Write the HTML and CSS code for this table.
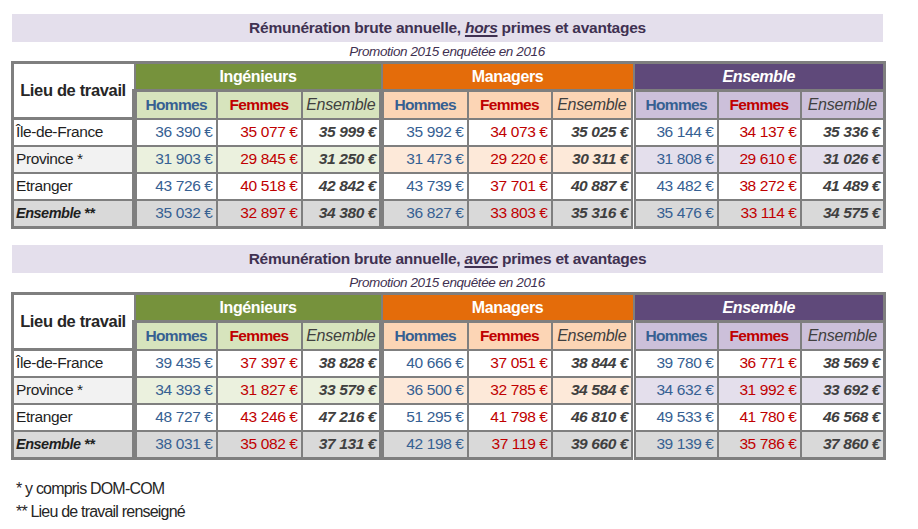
FILE: index.html
```html
<!DOCTYPE html>
<html lang="fr">
<head>
<meta charset="utf-8">
<title>Rémunération brute annuelle</title>
<link rel="stylesheet" href="styles.css">
</head>
<body>
<div class="page">
  <section class="block">
    <div class="title">Rémunération brute annuelle, <span class="u">hors</span> primes et avantages</div>
    <div class="subtitle">Promotion 2015 enquêtée en 2016</div>
    <table class="sal">
      <colgroup>
        <col class="c-lieu"><col class="c1"><col class="c2"><col class="c3"><col class="c4"><col class="c5"><col class="c6"><col class="c7"><col class="c8"><col class="c9">
      </colgroup>
      <thead>
        <tr class="r-group">
          <th rowspan="2" class="lieu-h">Lieu de travail</th>
          <th colspan="3" class="g-ing">Ingénieurs</th>
          <th colspan="3" class="g-man">Managers</th>
          <th colspan="3" class="g-ens">Ensemble</th>
        </tr>
        <tr class="r-sub">
          <th class="hm">Hommes</th><th class="fm">Femmes</th><th class="en">Ensemble</th>
          <th class="hm">Hommes</th><th class="fm">Femmes</th><th class="en">Ensemble</th>
          <th class="hm">Hommes</th><th class="fm">Femmes</th><th class="en">Ensemble</th>
        </tr>
      </thead>
      <tbody>
        <tr>
          <td class="lieu">Île-de-France</td>
          <td class="hm">36 390 €</td><td class="fm">35 077 €</td><td class="en">35 999 €</td>
          <td class="hm">35 992 €</td><td class="fm">34 073 €</td><td class="en">35 025 €</td>
          <td class="hm">36 144 €</td><td class="fm">34 137 €</td><td class="en">35 336 €</td>
        </tr>
        <tr class="prov">
          <td class="lieu">Province *</td>
          <td class="hm">31 903 €</td><td class="fm">29 845 €</td><td class="en">31 250 €</td>
          <td class="hm">31 473 €</td><td class="fm">29 220 €</td><td class="en">30 311 €</td>
          <td class="hm">31 808 €</td><td class="fm">29 610 €</td><td class="en">31 026 €</td>
        </tr>
        <tr>
          <td class="lieu">Etranger</td>
          <td class="hm">43 726 €</td><td class="fm">40 518 €</td><td class="en">42 842 €</td>
          <td class="hm">43 739 €</td><td class="fm">37 701 €</td><td class="en">40 887 €</td>
          <td class="hm">43 482 €</td><td class="fm">38 272 €</td><td class="en">41 489 €</td>
        </tr>
        <tr class="tot">
          <td class="lieu">Ensemble **</td>
          <td class="hm">35 032 €</td><td class="fm">32 897 €</td><td class="en">34 380 €</td>
          <td class="hm">36 827 €</td><td class="fm">33 803 €</td><td class="en">35 316 €</td>
          <td class="hm">35 476 €</td><td class="fm">33 114 €</td><td class="en">34 575 €</td>
        </tr>
      </tbody>
    </table>
  </section>

  <section class="block">
    <div class="title">Rémunération brute annuelle, <span class="u">avec</span> primes et avantages</div>
    <div class="subtitle">Promotion 2015 enquêtée en 2016</div>
    <table class="sal">
      <colgroup>
        <col class="c-lieu"><col class="c1"><col class="c2"><col class="c3"><col class="c4"><col class="c5"><col class="c6"><col class="c7"><col class="c8"><col class="c9">
      </colgroup>
      <thead>
        <tr class="r-group">
          <th rowspan="2" class="lieu-h">Lieu de travail</th>
          <th colspan="3" class="g-ing">Ingénieurs</th>
          <th colspan="3" class="g-man">Managers</th>
          <th colspan="3" class="g-ens">Ensemble</th>
        </tr>
        <tr class="r-sub">
          <th class="hm">Hommes</th><th class="fm">Femmes</th><th class="en">Ensemble</th>
          <th class="hm">Hommes</th><th class="fm">Femmes</th><th class="en">Ensemble</th>
          <th class="hm">Hommes</th><th class="fm">Femmes</th><th class="en">Ensemble</th>
        </tr>
      </thead>
      <tbody>
        <tr>
          <td class="lieu">Île-de-France</td>
          <td class="hm">39 435 €</td><td class="fm">37 397 €</td><td class="en">38 828 €</td>
          <td class="hm">40 666 €</td><td class="fm">37 051 €</td><td class="en">38 844 €</td>
          <td class="hm">39 780 €</td><td class="fm">36 771 €</td><td class="en">38 569 €</td>
        </tr>
        <tr class="prov">
          <td class="lieu">Province *</td>
          <td class="hm">34 393 €</td><td class="fm">31 827 €</td><td class="en">33 579 €</td>
          <td class="hm">36 500 €</td><td class="fm">32 785 €</td><td class="en">34 584 €</td>
          <td class="hm">34 632 €</td><td class="fm">31 992 €</td><td class="en">33 692 €</td>
        </tr>
        <tr>
          <td class="lieu">Etranger</td>
          <td class="hm">48 727 €</td><td class="fm">43 246 €</td><td class="en">47 216 €</td>
          <td class="hm">51 295 €</td><td class="fm">41 798 €</td><td class="en">46 810 €</td>
          <td class="hm">49 533 €</td><td class="fm">41 780 €</td><td class="en">46 568 €</td>
        </tr>
        <tr class="tot">
          <td class="lieu">Ensemble **</td>
          <td class="hm">38 031 €</td><td class="fm">35 082 €</td><td class="en">37 131 €</td>
          <td class="hm">42 198 €</td><td class="fm">37 119 €</td><td class="en">39 660 €</td>
          <td class="hm">39 139 €</td><td class="fm">35 786 €</td><td class="en">37 860 €</td>
        </tr>
      </tbody>
    </table>
  </section>

  <div class="notes">
    <p>* y compris DOM-COM</p>
    <p>** Lieu de travail renseigné</p>
  </div>
</div>
</body>
</html>
```

FILE: styles.css
```css
* { box-sizing: border-box; }

body {
  margin: 0;
  background: #ffffff;
  color: #262626;
  font-family: "Liberation Sans", Arial, sans-serif;
}

.page {
  width: 883px;
  padding: 14px 0 0 11px;
}

.block + .block { margin-top: 16px; }

.title {
  margin-left: 1px;
  height: 28px;
  line-height: 28px;
  background: #e4dfec;
  color: #3f3151;
  font-size: 15.5px;
  letter-spacing: -0.25px;
  font-weight: bold;
  text-align: center;
}

.title .u {
  font-style: italic;
  text-decoration: underline;
  text-decoration-thickness: 1.5px;
  text-underline-offset: 2px;
}

.subtitle {
  height: 19px;
  line-height: 19px;
  color: #3f3151;
  font-size: 13.5px;
  letter-spacing: -0.4px;
  font-style: italic;
  text-align: center;
}

table.sal {
  width: 872px;
  table-layout: fixed;
  border-collapse: collapse;
  border: 3px solid #7f7f7f;
  font-size: 15.5px;
  letter-spacing: -0.4px;
}

.c-lieu { width: 122px; }
.c1 { width: 82px; }
.c2 { width: 85px; }
.c3 { width: 80px; }
.c4 { width: 86px; }
.c5 { width: 84px; }
.c6 { width: 82px; }
.c7 { width: 84px; }
.c8 { width: 83px; }
.c9 { width: 84px; }

.sal th, .sal td {
  border: 2px solid #7f7f7f;
  padding: 0 2px;
  white-space: nowrap;
  overflow: hidden;
}

/* group separators */
.sal td:nth-child(2), .sal td:nth-child(5),
.r-sub th:nth-child(1), .r-sub th:nth-child(4),
.g-ing, .g-man { border-left: 5px solid #7f7f7f; }
.sal td:nth-child(8), .r-sub th:nth-child(7), .g-ens { border-left: 5px double #7f7f7f; }

/* header rows */
.r-group th {
  height: 28px;
  color: #ffffff;
  font-size: 16px;
  letter-spacing: -0.4px;
  font-weight: bold;
  border-bottom: 3px solid #7f7f7f;
}
.lieu-h {
  background: #ffffff;
  color: #262626 !important;
  font-size: 16.5px !important;
  letter-spacing: -0.35px !important;
}
.g-ing { background: #76923c; }
.g-man { background: #e46c0a; }
.g-ens { background: #5f497a; font-style: italic; }

.r-sub th {
  height: 28px;
  font-size: 15.5px;
  letter-spacing: -0.65px;
  font-weight: bold;
}
.r-sub th:nth-child(-n+3) { background: #d7e4bd; }
.r-sub th:nth-child(n+4):nth-child(-n+6) { background: #fcd5b5; }
.r-sub th:nth-child(n+7) { background: #ccc0da; }
.r-sub th.en {
  font-weight: normal;
  font-style: italic;
  font-size: 16px;
  letter-spacing: -0.25px;
  color: #404040;
}

/* colours of values */
.hm { color: #366092; }
.fm { color: #c00000; }
.en { color: #404040; }

/* body rows */
.sal tbody td {
  height: 27px;
  text-align: right;
  padding-right: 3px;
}
.sal tbody td.en {
  font-weight: bold;
  font-style: italic;
}
.sal tbody td.lieu {
  text-align: left;
  color: #1f1f1f;
  padding-left: 2px;
}

.prov td.lieu { background: #f2f2f2; }
.prov td:nth-child(n+2):nth-child(-n+4) { background: #ebf1de; }
.prov td:nth-child(n+5):nth-child(-n+7) { background: #fde9d9; }
.prov td:nth-child(n+8) { background: #e4dfec; }

.tot td { background: #d9d9d9; height: 28px !important; }
.tot td.lieu {
  font-weight: bold;
  font-style: italic;
  color: #404040;
  font-size: 14.5px;
  letter-spacing: -0.5px;
}

.notes {
  margin-top: 17px;
  padding-left: 5px;
  font-size: 16px;
  letter-spacing: -0.8px;
  line-height: 23px;
  color: #262626;
}
.notes p { margin: 0; }
```
